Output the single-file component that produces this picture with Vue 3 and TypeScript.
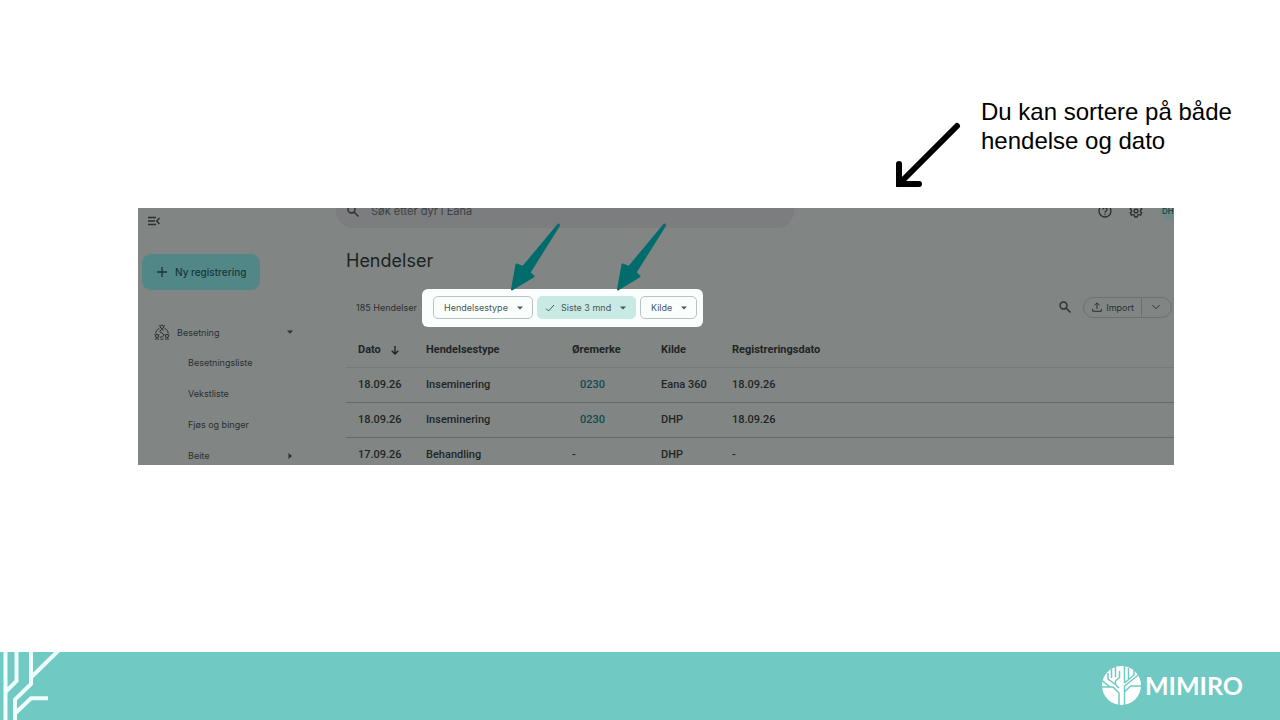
<script setup lang="ts">
import { ref } from 'vue'

interface HerdEvent {
  date: string
  type: string
  tag: string
  source: string
  registered: string
}

interface SubItem {
  label: string
  expandable: boolean
}

const query = ref('')
const eventType = ref('Hendelsestype')
const period = ref('Siste 3 mnd')
const source = ref('Kilde')

const subItems: SubItem[] = [
  { label: 'Besetningsliste', expandable: false },
  { label: 'Vekstliste', expandable: false },
  { label: 'Fjøs og binger', expandable: false },
  { label: 'Beite', expandable: true },
]

const events: HerdEvent[] = [
  { date: '18.09.26', type: 'Inseminering', tag: '0230', source: 'Eana 360', registered: '18.09.26' },
  { date: '18.09.26', type: 'Inseminering', tag: '0230', source: 'DHP', registered: '18.09.26' },
  { date: '17.09.26', type: 'Behandling', tag: '-', source: 'DHP', registered: '-' },
]
</script>

<template>
  <main class="slide">
    <div class="note">
      <svg class="note-arrow" viewBox="0 0 66 66" aria-hidden="true">
        <path d="M62 4 4 62M4 42v20h20" />
      </svg>
      <p>Du kan sortere på både hendelse og dato</p>
    </div>

    <section class="app">
      <nav class="sidebar">
        <button class="icon-btn collapse" aria-label="Skjul meny">
          <svg viewBox="0 0 12 10"><path d="M0 1.500h8M0 5h7M0 8.500h8M11.500 2 8.700 5l2.800 3" /></svg>
        </button>
        <button class="new-btn">
          <svg viewBox="0 0 10 10"><path d="M5 0v10M0 5h10" /></svg>
          Ny registrering
        </button>
        <a href="#" class="group">
          <svg class="herd" viewBox="0 0 16 16">
            <circle cx="8" cy="2.800" r="1.700" />
            <path d="M5 1.500l1.300.7M11 1.500l-1.300.7M5.300 4.500C3 5.500 2 7 1.800 9.500M10.700 4.500c2.300 1 3.300 2.500 3.500 5M9.800 6.200C8 5 5.500 6 6 7.800c.4 1.500 3.500 1 3.800 3 .2 1.700-1.800 2.700-4 2.200M6.500 15c1 .5 2 .5 3 0" />
            <circle cx="3" cy="12" r="1.600" />
            <circle cx="13" cy="12" r="1.600" />
            <path d="M.5 10.500l1 .7M5.500 10.500l-1 .7M10.500 10.500l1 .7M15.500 10.500l-1 .7M1 15h4M11 15h4" />
          </svg>
          <span>Besetning</span>
          <svg class="caret" viewBox="0 0 6 6"><path d="M0 1.500h6L3 4.800z" /></svg>
        </a>
        <a v-for="item in subItems" :key="item.label" href="#" class="sub">
          <span>{{ item.label }}</span>
          <svg v-if="item.expandable" class="caret" viewBox="0 0 6 6"><path d="M1.500 0v6L5 3z" /></svg>
        </a>
      </nav>

      <div class="content">
        <header class="topbar">
          <label class="search">
            <svg viewBox="0 0 12 12"><circle cx="4.500" cy="4.500" r="3.500" /><path d="M7.200 7.200 11.500 11.500" /></svg>
            <input v-model="query" type="text" placeholder="Søk etter dyr i Eana" aria-label="Søk etter dyr i Eana">
          </label>
          <div class="tools">
            <button class="icon-btn" aria-label="Hjelp">
              <svg viewBox="0 0 14 14"><circle cx="7" cy="7" r="6" /><path d="M5 5.500c0-2.600 4-2.600 4 0C9 7 7 7 7 8.700M7 9.800v1.200" /></svg>
            </button>
            <button class="icon-btn" aria-label="Innstillinger">
              <svg viewBox="0 0 14 14">
                <path d="M5.800 1h2.400l.4 1.700 1.300.8 1.700-.6 1.200 2.100L11.500 6.200v1.600l1.300 1.200-1.200 2.100-1.700-.6-1.300.8L8.200 13H5.800l-.4-1.700-1.300-.8-1.700.6L1.200 9l1.300-1.200V6.200L1.200 5l1.200-2.100 1.700.6 1.300-.8z" />
                <circle cx="7" cy="7" r="1.900" />
              </svg>
            </button>
            <button class="avatar">DH</button>
          </div>
        </header>

        <h1>Hendelser</h1>

        <div class="toolbar">
          <span class="count">185 Hendelser</span>
          <div class="filters">
            <div class="chip type">
              <select v-model="eventType" aria-label="Hendelsestype"><option>Hendelsestype</option></select>
              <svg class="caret" viewBox="0 0 6 6"><path d="M0 1.500h6L3 4.500z" /></svg>
            </div>
            <div class="chip period">
              <svg class="check" viewBox="0 0 10 10"><path d="M1 5.500 3.500 8 9 2" /></svg>
              <select v-model="period" aria-label="Periode"><option>Siste 3 mnd</option></select>
              <svg class="caret" viewBox="0 0 6 6"><path d="M0 1.500h6L3 4.500z" /></svg>
            </div>
            <div class="chip source">
              <select v-model="source" aria-label="Kilde"><option>Kilde</option></select>
              <svg class="caret" viewBox="0 0 6 6"><path d="M0 1.500h6L3 4.500z" /></svg>
            </div>
            <svg class="pointer first" viewBox="0 0 50 68" aria-hidden="true"><path d="M48.500 1.500 49 2.500 19.500 49.500 23.500 53.500 2 66.500 6.500 41.500 13 44z" /></svg>
            <svg class="pointer second" viewBox="0 0 50 68" aria-hidden="true"><path d="M48.500 1.500 49 2.500 19.500 49.500 23.500 53.500 2 66.500 6.500 41.500 13 44z" /></svg>
          </div>
          <button class="icon-btn find" aria-label="Søk i hendelser">
            <svg viewBox="0 0 12 12"><circle cx="4.500" cy="4.500" r="3.500" /><path d="M7.200 7.200 11.500 11.500" /></svg>
          </button>
          <div class="split">
            <button class="import">
              <svg viewBox="0 0 10 10"><path d="M5 7V1M2.500 3.300 5 .8l2.500 2.500M.7 6.800v2.500h8.600V6.800" /></svg>
              Import
            </button>
            <button class="more" aria-label="Flere valg">
              <svg viewBox="0 0 10 10"><path d="M1.500 3.200 5 6.700l3.500-3.500" /></svg>
            </button>
          </div>
        </div>

        <table>
          <colgroup>
            <col class="c-date"><col class="c-type"><col class="c-tag"><col class="c-source"><col>
          </colgroup>
          <thead>
            <tr>
              <th>
                Dato
                <svg class="sort" viewBox="0 0 8 9"><path d="M4 0v8M.7 4.800 4 8l3.300-3.200" /></svg>
              </th>
              <th>Hendelsestype</th>
              <th>Øremerke</th>
              <th>Kilde</th>
              <th>Registreringsdato</th>
            </tr>
          </thead>
          <tbody>
            <tr v-for="(event, i) in events" :key="i">
              <td>{{ event.date }}</td>
              <td>{{ event.type }}</td>
              <td>
                <a v-if="event.tag !== '-'" href="#">{{ event.tag }}</a>
                <template v-else>-</template>
              </td>
              <td>{{ event.source }}</td>
              <td>{{ event.registered }}</td>
            </tr>
          </tbody>
        </table>
      </div>
    </section>

    <footer class="brandbar">
      <svg class="branches" viewBox="0 0 60 68" aria-hidden="true">
        <path d="M5.500-2v72M16.500-2v31L6 39.500M31-2v34L15 47.500V70M59-2 31 25.500M15 61.500l16-15.300h17" />
      </svg>
      <div class="logo">
        <svg viewBox="0 0 39 39" aria-hidden="true">
          <circle cx="19.500" cy="19.500" r="19.500" class="disc" />
          <path d="M17 39V27l-6-6H8l-8-6.500M22.500 39V26l6-6h11M22.500 26v-6L37 8.500M17 22l-3.500-3.500L6 13V7M13.500 18.500V15M9.500 12V3M13.500 11V1M13.500 15l4-3.500V5M22.500 17V0M26.500 13V2M22.500 17l9.500-8V4M0 21h8" />
        </svg>
        <span>MIMIRO</span>
      </div>
    </footer>
  </main>
</template>

<style>
body {
  margin: 0;
  background: #fff;
}
</style>

<style scoped>
.slide {
  display: flex;
  flex-direction: column;
  min-height: 100vh;
  font-family: Inter, "Liberation Sans", sans-serif;
}

* {
  box-sizing: border-box;
}

button,
select,
input {
  font: inherit;
  color: inherit;
  background: none;
  border: 0;
  padding: 0;
  margin: 0;
}

a {
  color: inherit;
  text-decoration: none;
}

svg {
  flex: none;
  fill: none;
  stroke: currentColor;
}

.caret {
  width: 6px;
  height: 6px;
  fill: currentColor;
  stroke: none;
}

.note {
  display: flex;
  justify-content: flex-end;
  gap: 20px;
  padding: 97px 39px 20px 0;
}

.note p {
  width: 260px;
  margin: 0;
  font: 24px/29px "Liberation Sans", Arial, sans-serif;
  color: #000;
}

.note-arrow {
  width: 66px;
  height: 66px;
  margin-top: 25px;
  stroke: #000;
  stroke-width: 6;
  stroke-linecap: round;
  stroke-linejoin: miter;
}

.app {
  display: grid;
  grid-template-columns: 198px 1fr;
  height: 257px;
  margin: 0 106px 0 138px;
  overflow: hidden;
  background: #818685;
  color: #2a2f2f;
}

.icon-btn {
  display: flex;
  align-items: center;
  justify-content: center;
}

.sidebar {
  display: flex;
  flex-direction: column;
  align-items: flex-start;
  padding: 8px 43px 0 4px;
  font-size: 9px;
}

.collapse {
  margin-left: 6px;
  height: 10px;
}

.collapse svg {
  width: 12px;
  height: 10px;
  stroke-width: 1.4;
}

.new-btn {
  display: flex;
  align-items: center;
  gap: 8px;
  height: 36px;
  margin: 28px 0 27px;
  padding: 0 14px 0 15px;
  border-radius: 9px;
  background: #528788;
  color: #14393b;
  font-size: 10px;
  font-weight: 500;
}

.new-btn svg {
  width: 10px;
  height: 10px;
  stroke-width: 1.4;
}

.group,
.sub {
  display: flex;
  align-items: center;
  justify-content: space-between;
  align-self: stretch;
  height: 31px;
}

.group {
  gap: 7px;
  height: 30px;
  padding-left: 12px;
}

.group span {
  flex: 1;
}

.sub {
  padding-left: 46px;
}

.herd {
  width: 16px;
  height: 16px;
}

.content {
  min-width: 0;
}

.topbar {
  display: flex;
  align-items: center;
  justify-content: space-between;
  height: 34px;
  margin-top: -14px;
}

.search {
  display: flex;
  align-items: center;
  gap: 12px;
  width: 458px;
  height: 34px;
  padding: 0 11px;
  border-radius: 17px;
  background: #7c7d7f;
  font-size: 11px;
}

.search svg,
.find svg {
  width: 12px;
  height: 12px;
  stroke-width: 1.4;
}

.search input {
  flex: 1;
  outline: 0;
}

.search input::placeholder {
  color: #3c4141;
  opacity: 1;
}

.tools {
  display: flex;
  align-items: center;
  gap: 17px;
  margin-right: -6px;
}

.tools svg {
  width: 14px;
  height: 14px;
  stroke-width: 1.3;
}

.avatar {
  width: 20px;
  height: 20px;
  padding-left: 2px;
  border-radius: 50%;
  background: #6d8a88;
  color: #173d3d;
  font-size: 8px;
  font-weight: 500;
  text-align: left;
}

h1 {
  margin: 21px 0 16px 10px;
  font-size: 18px;
  line-height: 24px;
  font-weight: 400;
  color: #1d2121;
}

.toolbar {
  display: flex;
  align-items: center;
  height: 38px;
  padding: 0 2px 2px 20px;
  font-size: 9px;
}

.count {
  width: 66px;
  white-space: nowrap;
}

.filters {
  position: relative;
  display: flex;
  align-self: flex-start;
  gap: 4px;
  padding: 7px 6px 8px 11px;
  border-radius: 6px;
  background: #fafffe;
  color: #4a5554;
}

.chip {
  position: relative;
  display: flex;
  align-items: center;
  height: 23px;
  border: 1px solid #b9c3c1;
  border-radius: 5px;
}

.chip select {
  flex: 1;
  min-width: 0;
  height: 21px;
  padding-left: 10px;
  appearance: none;
  outline: 0;
}

.chip .caret {
  position: absolute;
  right: 9px;
  pointer-events: none;
}

.type {
  width: 100px;
}

.period {
  width: 99px;
  padding-left: 7px;
  border-color: #c9e9e5;
  background: #c9e9e5;
}

.period select {
  padding-left: 6px;
}

.check {
  width: 10px;
  height: 10px;
}

.source {
  width: 57px;
}

.pointer {
  position: absolute;
  bottom: 36px;
  width: 50px;
  height: 68px;
  fill: #006c6c;
  stroke: #006c6c;
  stroke-width: 2;
  stroke-linejoin: round;
  pointer-events: none;
}

.first {
  left: 88px;
}

.second {
  left: 194px;
}

.find {
  margin: 0 12px 0 auto;
}

.split {
  display: flex;
  height: 21px;
  border: 1px solid #6b7170;
  border-radius: 11px;
}

.split svg {
  width: 10px;
  height: 10px;
}

.import {
  display: flex;
  align-items: center;
  gap: 4px;
  padding: 0 7px 0 8px;
}

.more {
  display: flex;
  align-items: center;
  padding: 0 10px 0 9px;
  border-left: 1px solid #6b7170;
}

table {
  width: calc(100% - 10px);
  margin: 5px 0 0 10px;
  border-collapse: collapse;
  table-layout: fixed;
  font: 500 11px/14px Roboto, "Liberation Sans", sans-serif;
  color: #1f2424;
}

.c-date {
  width: 80px;
}

.c-type {
  width: 146px;
}

.c-tag {
  width: 89px;
}

.c-source {
  width: 71px;
}

th,
td {
  height: 35px;
  padding: 0;
  border-bottom: 1px solid #656a69;
  text-align: left;
  white-space: nowrap;
}

th {
  padding-top: 2px;
  border-bottom-color: #767b7a;
  font-weight: 700;
}

th:first-child,
td:first-child {
  padding-left: 12px;
}

td a {
  padding-left: 8px;
  color: #114a50;
}

.sort {
  width: 8px;
  height: 9px;
  margin-left: 7px;
  vertical-align: -2px;
  stroke-width: 1.4;
}

.brandbar {
  display: flex;
  align-items: center;
  justify-content: space-between;
  height: 68px;
  margin-top: auto;
  padding-right: 37px;
  background: #70c9c2;
  color: #fff;
}

.branches {
  width: 60px;
  height: 68px;
  stroke: #effffd;
  stroke-width: 4;
}

.logo {
  display: flex;
  align-items: center;
  gap: 4px;
  padding-bottom: 2px;
  font: 700 25px/30px Lato, sans-serif;
}

.logo svg {
  width: 39px;
  height: 39px;
  stroke: #70c9c2;
  stroke-width: 1.5;
}

.disc {
  fill: #fff;
  stroke: none;
}
</style>
